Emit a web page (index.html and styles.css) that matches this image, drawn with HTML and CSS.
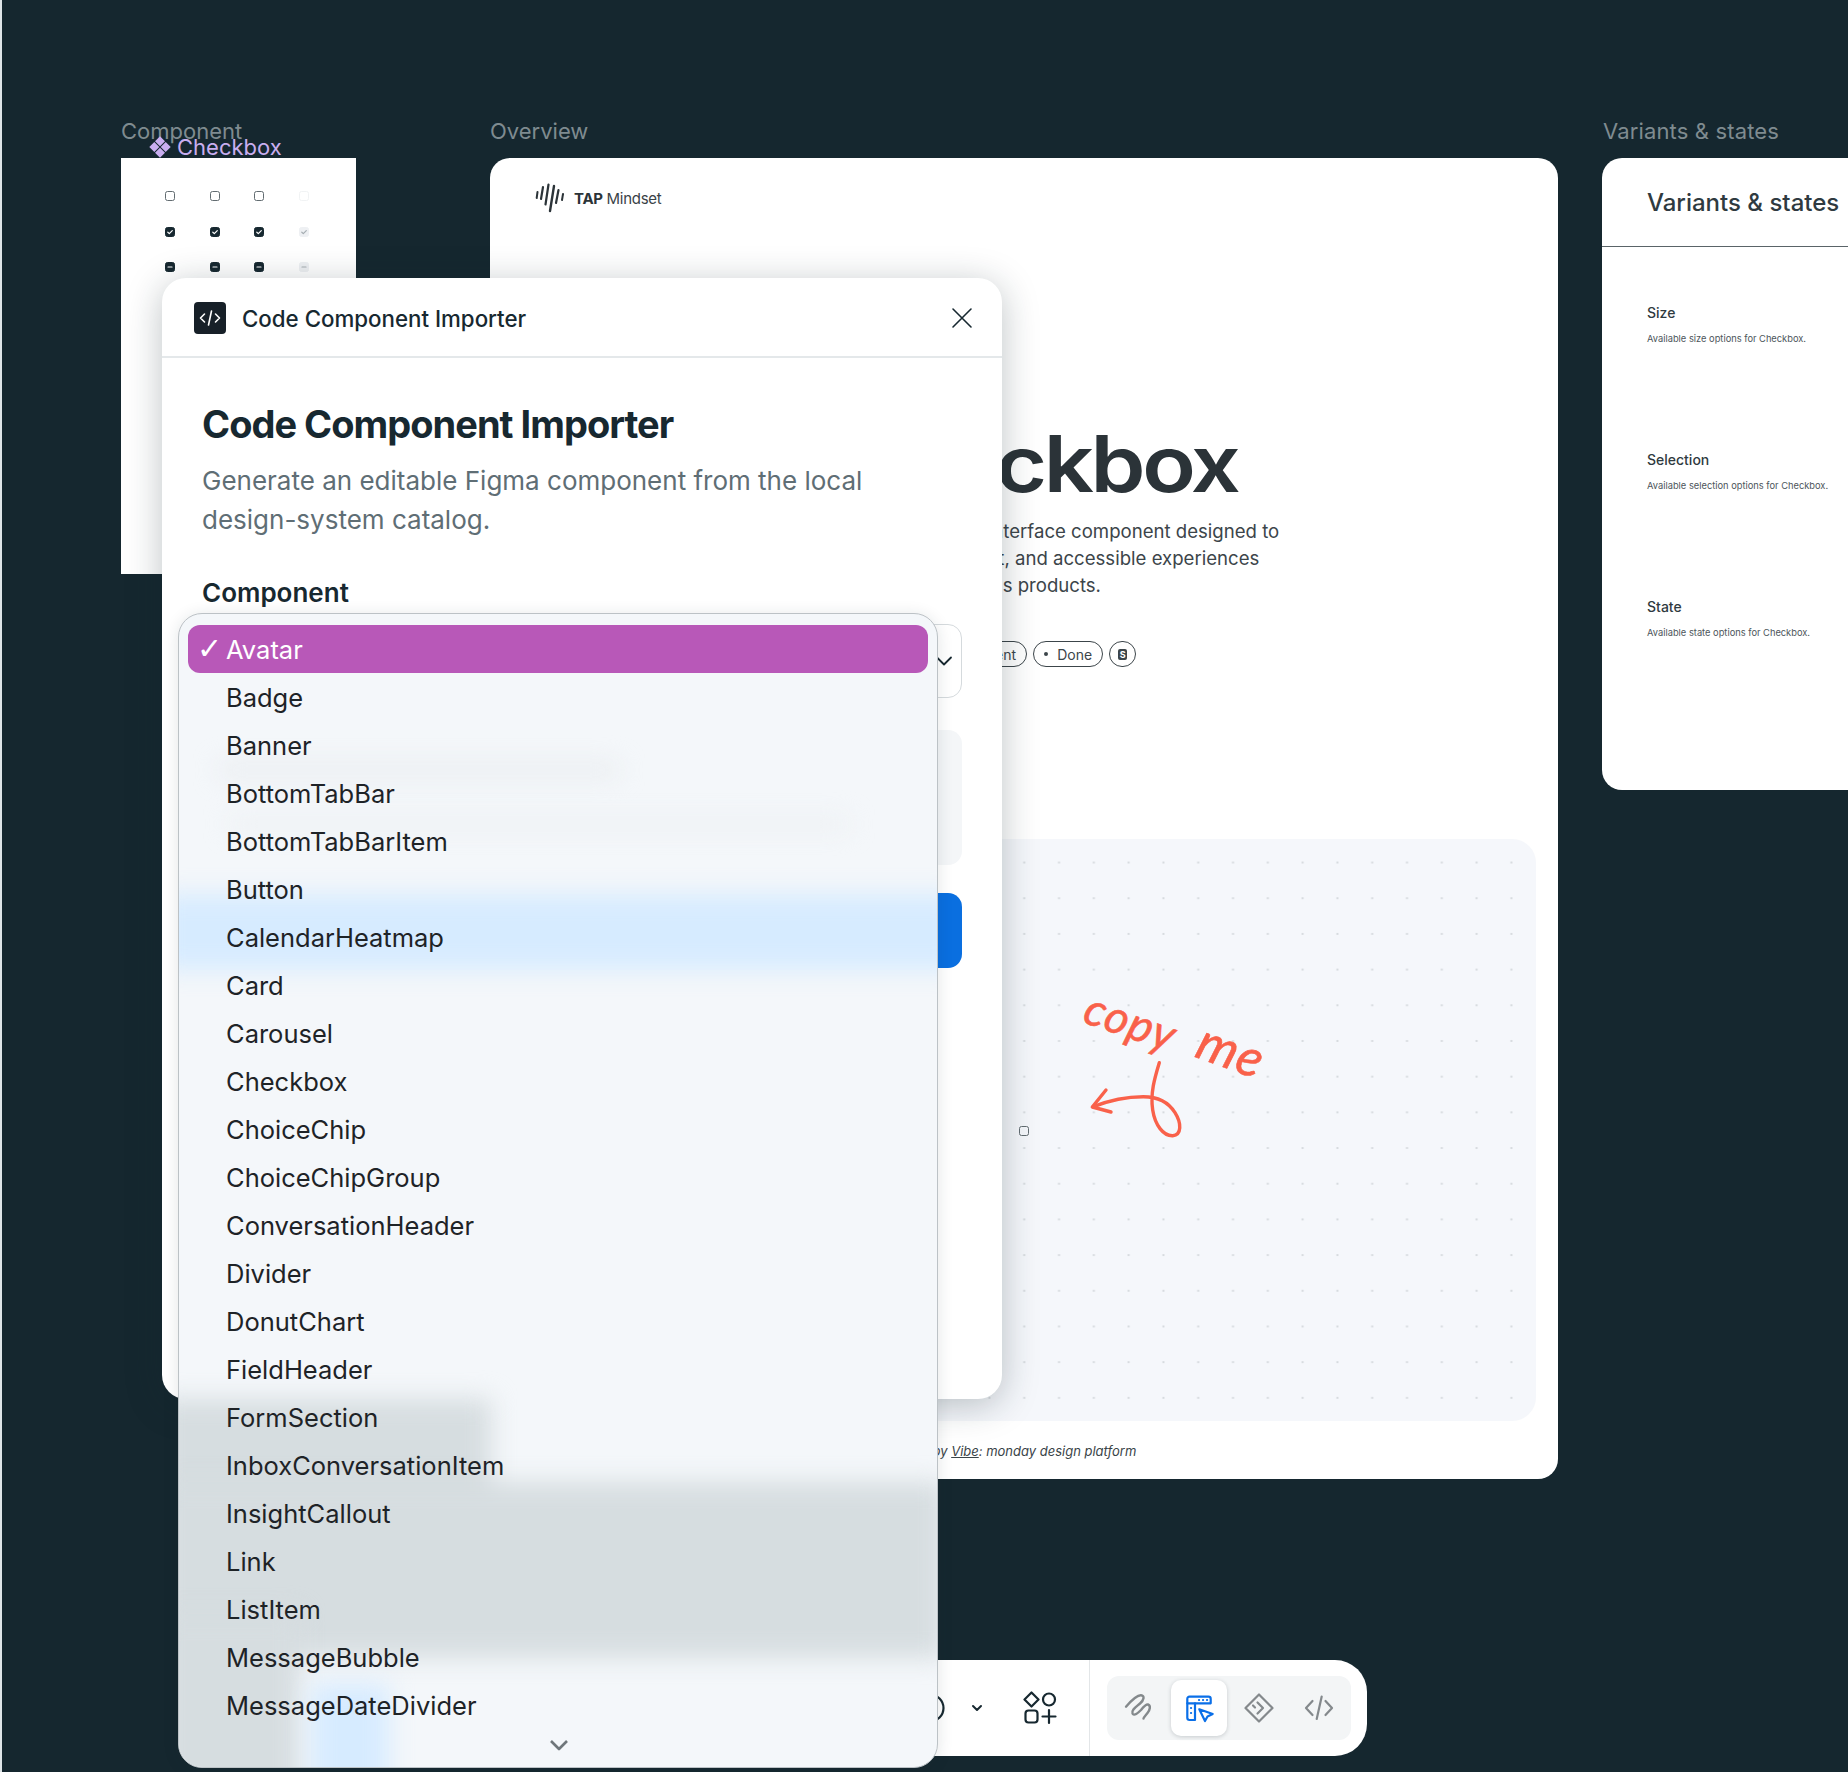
FILE: index.html
```html
<!DOCTYPE html>
<html lang="en">
<head>
    <meta charset="UTF-8">
    <meta name="viewport" content="width=device-width, initial-scale=1.0">
    <title>Code Component Importer</title>
    <link rel="stylesheet" href="styles.css">
</head>
<body>
    <div class="canvas">
        <!-- frame labels -->
        <div class="frame-label label-component">Component</div>
        <div class="frame-label label-overview">Overview</div>
        <div class="frame-label label-variants">Variants &amp; states</div>
        <div class="instance-label">
            <svg width="22" height="22" viewBox="0 0 22 22"><path fill="#c9aef0" d="M11 0.300l5 5-5 5-5-5zM5.300 6l5 5-5 5-5-5zM16.700 6l5 5-5 5-5-5zM11 11.700l5 5-5 5-5-5z"/></svg>
            <span>Checkbox</span>
        </div>

        <!-- component frame -->
        <div class="component-frame">
            <div class="check-grid">
                <span class="cb"></span><span class="cb"></span><span class="cb"></span><span class="cb off"></span>
                <span class="cb on">
                    <svg viewBox="0 0 10 10"><path d="M2.800 5.200l1.500 1.400 3-3"/></svg>
                </span>
                <span class="cb on">
                    <svg viewBox="0 0 10 10"><path d="M2.800 5.200l1.500 1.400 3-3"/></svg>
                </span>
                <span class="cb on">
                    <svg viewBox="0 0 10 10"><path d="M2.800 5.200l1.500 1.400 3-3"/></svg>
                </span>
                <span class="cb on off">
                    <svg viewBox="0 0 10 10"><path d="M2.800 5.200l1.500 1.400 3-3"/></svg>
                </span>
                <span class="cb on"><svg viewBox="0 0 10 10"><path d="M3 5h4"/></svg></span>
                <span class="cb on"><svg viewBox="0 0 10 10"><path d="M3 5h4"/></svg></span>
                <span class="cb on"><svg viewBox="0 0 10 10"><path d="M3 5h4"/></svg></span>
                <span class="cb on off"><svg viewBox="0 0 10 10"><path d="M3 5h4"/></svg></span>
            </div>
        </div>

        <!-- overview frame -->
        <div class="overview-frame">
            <div class="brand">
                <svg width="30" height="30" viewBox="0 0 30 30" fill="none" stroke="#2b3338" stroke-linecap="round">
                    <path stroke-width="2" d="M2.500 9l-.8 6"/>
                    <path stroke-width="2.200" d="M8 4l-2 12"/>
                    <path stroke-width="2.200" d="M13.500 1.500l-3 20"/>
                    <path stroke-width="2.400" d="M19 3l-4 25"/>
                    <path stroke-width="2.200" d="M23.500 7l-2.500 13"/>
                    <path stroke-width="2" d="M28 11l-1 6"/>
                </svg>
                <span class="brand-name"><b>TAP</b> Mindset</span>
            </div>
            <div class="hero">
                <h1 class="hero-title">Checkbox</h1>
                <p class="hero-desc">
                    <span>Checkbox is a user interface component designed to</span>
                    <span>to create a consistent, and accessible experiences</span>
                    <span>across all your various products.</span>
                </p>
                <div class="chips">
                    <span class="chip">Component</span>
                    <span class="chip"><i class="chip-dot"></i>Done</span>
                    <span class="chip chip-icon"><i class="chip-s">S</i></span>
                </div>
            </div>
            <div class="copy-panel">
                <span class="cb panel-cb"></span>
                <div class="copy-note">
                    <span class="copy-word copy-1">copy</span>
                    <span class="copy-word copy-2">me</span>
                    <svg class="copy-arrow" viewBox="0 0 300 220" fill="none" stroke="#f9614a" stroke-width="3.400" stroke-linecap="round" stroke-linejoin="round">
                        <path d="M159.300 102.700C155 117 150 133 152.700 150C155 165 163.300 176 172.700 175.700C181.700 175 181.700 163.300 175 152.700C168.300 141.700 156.700 136.700 143.300 136.700C126.700 136.700 110 140 93.300 146.700"/>
                        <path d="M106 130L92.300 147L111 152"/>
                    </svg>
                </div>
            </div>
            <p class="credit">Design system inspired by <u>Vibe</u>: monday design platform</p>
        </div>

        <!-- variants frame -->
        <div class="variants-frame">
            <h2 class="variants-title">Variants &amp; states</h2>
            <div class="variant-list">
                <div class="variant"><h3>Size</h3><p>Available size options for Checkbox.</p></div>
                <div class="variant"><h3>Selection</h3><p>Available selection options for Checkbox.</p></div>
                <div class="variant"><h3>State</h3><p>Available state options for Checkbox.</p></div>
            </div>
        </div>

        <!-- bottom toolbar -->
        <div class="toolbar">
            <div class="tool-blue"></div>
            <div class="tool-right">
                <svg class="tool-circle" width="30" height="30" viewBox="0 0 30 30" fill="none" stroke="#172830" stroke-width="2.200"><circle cx="15" cy="15" r="13.500"/></svg>
                <svg class="tool-caret" width="12" height="8" viewBox="0 0 12 8" fill="none" stroke="#172830" stroke-width="2" stroke-linecap="round" stroke-linejoin="round"><path d="M2 2l4 4 4-4"/></svg>
                <svg class="tool-shapes" width="34" height="34" viewBox="0 0 34 34" fill="none" stroke="#172830" stroke-width="2.200" stroke-linejoin="round">
                    <path d="M8.500 1.500L15.500 8.500L8.500 15.500L1.500 8.500Z"/>
                    <circle cx="26" cy="8.500" r="6"/>
                    <rect x="2.500" y="19.500" width="12" height="12" rx="3"/>
                    <path d="M26 19v13M19.500 25.500h13" stroke-linecap="round"/>
                </svg>
                <div class="tool-divider"></div>
                <div class="mode-group">
                    <div class="mode">
                        <svg width="32" height="32" viewBox="0 0 32 32" fill="none" stroke="#84898c" stroke-width="2.400" stroke-linecap="round" stroke-linejoin="round"><path d="M3 14.700C8 9 14 3 18 3.300C22 3.600 21 8 17 11.500C13 15 8 18 9.500 21.500C11 24.500 15 21 18 18C20 15.500 23 12 25 12.500C28 13.500 27 18 24.500 21C23 23 20.500 25.500 20.500 26.500"/></svg>
                    </div>
                    <div class="mode mode-active">
                        <svg width="32" height="32" viewBox="0 0 32 32" fill="none" stroke="#0a6fe8" stroke-width="2.200" stroke-linecap="round" stroke-linejoin="round">
                            <path d="M12 28H6.500A2.200 2.200 0 0 1 4.300 25.800V6.900A2.200 2.200 0 0 1 6.500 4.700H25.500A2.200 2.200 0 0 1 27.700 6.900V11.300H12Z"/>
                            <path d="M4.300 11.300H12"/>
                            <path d="M16 8h.1M20 8h.1M24 8h.1M8 16h.1M8 21h.1"/>
                            <path d="M16.300 17.300L29.700 22L24.500 24.500L22 29Z"/>
                        </svg>
                    </div>
                    <div class="mode">
                        <svg width="32" height="32" viewBox="0 0 32 32" fill="none" stroke="#84898c" stroke-width="2.200" stroke-linecap="round" stroke-linejoin="round">
                            <path d="M16 2.500L29.500 16L16 29.500L2.500 16Z"/>
                            <path d="M14.500 10.500L20 16L14.500 21.500M10 13.500L12 15.500"/>
                        </svg>
                    </div>
                    <div class="mode">
                        <svg width="32" height="32" viewBox="0 0 32 32" fill="none" stroke="#84898c" stroke-width="2.200" stroke-linecap="round" stroke-linejoin="round"><path d="M9.500 9L3 16L9.500 23M22.500 9L29 16L22.500 23M18.700 4.500L13.700 27"/></svg>
                    </div>
                </div>
            </div>
        </div>

        <!-- plugin window -->
        <div class="modal">
            <div class="modal-head">
                <span class="plugin-icon">
                    <svg width="24" height="24" viewBox="0 0 24 24" fill="none" stroke="#fff" stroke-width="1.600" stroke-linecap="round" stroke-linejoin="round"><path d="M6.500 8L2.500 12L6.500 16M17.500 8L21.500 12L17.500 16M13.500 5L10.500 19"/></svg>
                </span>
                <span class="modal-name">Code Component Importer</span>
                <svg class="modal-close" width="22" height="22" viewBox="0 0 22 22" fill="none" stroke="#172830" stroke-width="1.600" stroke-linecap="round"><path d="M2 2L20 20M20 2L2 20"/></svg>
            </div>
            <div class="modal-body">
                <h2 class="modal-title">Code Component Importer</h2>
                <p class="modal-sub">Generate an editable Figma component from the local design-system catalog.</p>
                <div class="field-label">Component</div>
                <div class="select">
                    <span>Avatar</span>
                    <svg width="18" height="12" viewBox="0 0 18 12" fill="none" stroke="#172830" stroke-width="1.800" stroke-linecap="round" stroke-linejoin="round"><path d="M2 2.500L9 9.500L16 2.500"/></svg>
                </div>
                <div class="select-note"></div>
                <div class="primary-btn"></div>
            </div>
        </div>

        <!-- native select list -->
        <div class="dropdown">
            <div class="blur-layer">
                <i class="smear smear-a"></i>
                <i class="smear smear-b"></i>
                <i class="smear smear-blue"></i>
                <i class="smear smear-dark-left"></i>
                <i class="smear smear-dark-band"></i>
                <i class="smear smear-dark-corner"></i>
                <i class="smear smear-tool"></i>
            </div>
            <div class="option selected"><span class="tick">✓</span>Avatar</div>
            <div class="option">Badge</div>
            <div class="option">Banner</div>
            <div class="option">BottomTabBar</div>
            <div class="option">BottomTabBarItem</div>
            <div class="option">Button</div>
            <div class="option">CalendarHeatmap</div>
            <div class="option">Card</div>
            <div class="option">Carousel</div>
            <div class="option">Checkbox</div>
            <div class="option">ChoiceChip</div>
            <div class="option">ChoiceChipGroup</div>
            <div class="option">ConversationHeader</div>
            <div class="option">Divider</div>
            <div class="option">DonutChart</div>
            <div class="option">FieldHeader</div>
            <div class="option">FormSection</div>
            <div class="option">InboxConversationItem</div>
            <div class="option">InsightCallout</div>
            <div class="option">Link</div>
            <div class="option">ListItem</div>
            <div class="option">MessageBubble</div>
            <div class="option">MessageDateDivider</div>
            <svg class="more" width="20" height="12" viewBox="0 0 20 12" fill="none" stroke="#6f767a" stroke-width="2.600" stroke-linejoin="round"><path d="M2 2L10 10L18 2"/></svg>
        </div>
    </div>
</body>
</html>
```

FILE: styles.css
```css
* {
    box-sizing: border-box;
    margin: 0;
    padding: 0;
}
html, body {
    height: 100%;
}
body {
    background-color: #15272f;
    font-family: "Inter", "Liberation Sans", sans-serif;
    overflow: hidden;
}

/* free canvas: frames sit where they were placed */
.canvas {
    position: relative;
    width: 1848px;
    height: 1772px;
    overflow: hidden;
}
.canvas::before {
    content: "";
    position: absolute;
    left: 0;
    top: 0;
    width: 2px;
    height: 100%;
    background: #dfe5e8;
}
.frame-label {
    position: absolute;
    top: 118px;
    font-size: 22px;
    line-height: 26px;
    color: #7f8b90;
}
.label-component { left: 121px; }
.label-overview { left: 490px; }
.label-variants { left: 1603px; letter-spacing: 0.15px; }
.instance-label {
    position: absolute;
    left: 149px;
    top: 135px;
    display: flex;
    align-items: center;
    gap: 6px;
    font-size: 22px;
    line-height: 24px;
    color: #c9aef0;
}

/* component frame */
.component-frame {
    position: absolute;
    left: 121px;
    top: 158px;
    width: 235px;
    height: 416px;
    background: #fff;
    padding: 33px 0 0 44px;
}
.check-grid {
    display: grid;
    grid-template-columns: repeat(4, 10px);
    grid-auto-rows: 10px;
    column-gap: 34.600px;
    row-gap: 25.700px;
}
.cb {
    display: block;
    width: 10px;
    height: 10px;
    border: 1px solid #626c71;
    border-radius: 2.500px;
}
.cb svg {
    display: block;
    width: 10px;
    height: 10px;
    margin: -1px;
    fill: none;
    stroke: #fff;
    stroke-width: 1.200;
    stroke-linecap: round;
    stroke-linejoin: round;
}
.cb.on {
    background: #172830;
    border-color: #172830;
}
.cb.off {
    border-color: #f1f3f4;
}
.cb.on.off {
    background: #eef0f3;
    border-color: #eef0f3;
}
.cb.on.off svg {
    stroke: #a5adb2;
}

/* overview frame */
.overview-frame {
    position: absolute;
    left: 490px;
    top: 158px;
    width: 1068px;
    height: 1321px;
    background: #fff;
    border-radius: 20px;
    padding: 22px 22px 0;
}
.brand {
    display: flex;
    align-items: center;
    gap: 9px;
    margin-left: 23px;
    height: 36px;
}
.brand-name {
    font-size: 15px;
    letter-spacing: -0.3px;
    color: #3a4247;
}
.brand-name b {
    font-weight: 700;
    color: #2b3338;
}
.hero {
    margin-top: 204px;
    padding-left: 303px;
    height: 419px;
}
.hero-title {
    margin-left: 20px;
    font-size: 78px;
    line-height: 88px;
    font-weight: 600;
    letter-spacing: -3px;
    color: #2b3338;
    white-space: nowrap;
    /* the original face is wider than anything installed */
    transform: scaleX(1.13);
    transform-origin: left center;
}
.hero-desc {
    margin-top: 10px;
    font-size: 18.600px;
    line-height: 26.800px;
    color: #3c454a;
    white-space: nowrap;
}
.hero-desc span {
    display: block;
}
.chips {
    display: flex;
    gap: 6px;
    margin-top: 43px;
    margin-left: 113px;
}
.chip {
    display: flex;
    align-items: center;
    height: 26px;
    padding: 0 10px;
    border: 1.500px solid #3c454a;
    border-radius: 13px;
    font-size: 14px;
    color: #3c454a;
}
.chip-dot {
    width: 4px;
    height: 4px;
    margin-right: 9px;
    border-radius: 50%;
    background: #3c454a;
}
.chip-icon {
    width: 27px;
    padding: 0;
    justify-content: center;
}
.chip-s {
    width: 9px;
    height: 11px;
    border-radius: 2px;
    background: #3c454a;
    color: #fff;
    font-size: 9px;
    font-style: normal;
    font-weight: 700;
    line-height: 11px;
    text-align: center;
}
.copy-panel {
    position: relative;
    height: 582px;
    background-color: #f5f7fb;
    background-image: radial-gradient(circle at center, #d6dade 0, #d6dade 0.9px, transparent 1.300px);
    background-size: 34.800px 35.700px;
    background-position: 7.700px 5.700px;
    border-radius: 24px;
}
.panel-cb {
    position: absolute;
    left: 507px;
    top: 287px;
}
.copy-note {
    position: absolute;
    left: 488px;
    top: 121px;
    width: 300px;
    height: 220px;
}
.copy-word {
    position: absolute;
    font-family: "Lato", sans-serif;
    font-style: italic;
    font-size: 46px;
    line-height: 46px;
    color: #f9614a;
    letter-spacing: 1px;
    -webkit-text-stroke: 0.6px #f9614a;
}
.copy-1 {
    left: 84px;
    top: 38px;
    transform: rotate(19deg);
}
.copy-2 {
    left: 198px;
    top: 66px;
    font-size: 52px;
    transform: rotate(20deg);
}
.copy-arrow {
    position: absolute;
    left: 0;
    top: 0;
    width: 300px;
    height: 220px;
}
.credit {
    margin-top: 20px;
    padding-left: 274px;
    font-size: 13px;
    line-height: 20px;
    font-style: italic;
    color: #3a4448;
    white-space: nowrap;
}

/* variants frame */
.variants-frame {
    position: absolute;
    left: 1602px;
    top: 158px;
    width: 400px;
    height: 632px;
    background: #fff;
    border-radius: 20px;
}
.variants-title {
    height: 89px;
    padding: 30px 0 0 45px;
    border-bottom: 1px solid #5a6468;
    font-size: 24px;
    line-height: 30px;
    font-weight: 500;
    color: #2f3a40;
    white-space: nowrap;
}
.variant-list {
    padding: 56px 0 0 45px;
}
.variant {
    height: 147px;
}
.variant h3 {
    font-size: 14px;
    line-height: 20px;
    font-weight: 500;
    color: #2f3a40;
}
.variant p {
    margin-top: 9px;
    font-size: 9.300px;
    line-height: 14px;
    color: #4d565b;
    white-space: nowrap;
}

/* bottom toolbar */
.toolbar {
    position: absolute;
    left: 300px;
    top: 1660px;
    width: 1067px;
    height: 96px;
    display: flex;
    align-items: center;
    justify-content: space-between;
    padding: 0 16px 0 14px;
    background: #fff;
    border-radius: 32px;
}
.tool-blue {
    width: 76px;
    height: 56px;
    border-radius: 10px;
    background: #0a6fe8;
}
.tool-right {
    display: flex;
    align-items: center;
    height: 96px;
}
.tool-circle {
    margin-right: 26px;
}
.tool-caret {
    margin-right: 40px;
}
.tool-shapes {
    margin-right: 32px;
}
.tool-divider {
    width: 1.500px;
    height: 96px;
    margin-right: 17px;
    background: #e3e6e8;
}
.mode-group {
    display: flex;
    gap: 4px;
    padding: 4px;
    background: #f3f5f6;
    border-radius: 12px;
}
.mode {
    display: flex;
    align-items: center;
    justify-content: center;
    width: 56px;
    height: 56px;
    border-radius: 10px;
}
.mode-active {
    background: #fff;
    box-shadow: 0 1px 4px rgba(23, 40, 48, 0.2);
}

/* plugin window */
.modal {
    position: absolute;
    left: 162px;
    top: 278px;
    width: 840px;
    height: 1121px;
    background: #fff;
    border-radius: 24px;
    box-shadow: 0 6px 36px rgba(23, 40, 48, 0.28);
}
.modal-head {
    display: flex;
    align-items: center;
    height: 80px;
    padding: 2px 29px 0 32px;
    border-bottom: 2px solid #e4e8ea;
}
.plugin-icon {
    display: flex;
    align-items: center;
    justify-content: center;
    width: 32px;
    height: 32px;
    margin-right: 16px;
    border-radius: 4px;
    background: #172028;
}
.modal-name {
    flex: 1;
    font-size: 22.300px;
    font-weight: 500;
    color: #172830;
}
.modal-body {
    padding: 43px 40px 0;
}
.modal-title {
    font-size: 38px;
    line-height: 46px;
    font-weight: 700;
    letter-spacing: -0.980px;
    color: #172830;
}
.modal-sub {
    margin-top: 15px;
    width: 700px;
    font-size: 26px;
    line-height: 38.500px;
    color: #5f6e75;
}
.field-label {
    margin-top: 38px;
    font-size: 26px;
    line-height: 32px;
    font-weight: 600;
    color: #172830;
}
.select {
    display: flex;
    align-items: center;
    justify-content: space-between;
    height: 74px;
    margin-top: 15px;
    padding: 0 8px 0 24px;
    border: 1.500px solid #d5dadd;
    border-radius: 14px;
    font-size: 24px;
    color: #172830;
}
.select-note {
    height: 135px;
    margin-top: 32px;
    background: #f4f6f8;
    border-radius: 14px;
}
.primary-btn {
    height: 75px;
    margin-top: 28px;
    background: #0a6fe0;
    border-radius: 14px;
}

/* native select list */
.dropdown {
    position: absolute;
    left: 178px;
    top: 613px;
    width: 760px;
    height: 1155px;
    padding: 11px 9px 0;
    background: #f4f7fa;
    border: 1px solid #bcc2c6;
    border-radius: 24px;
    overflow: hidden;
    box-shadow: 0 2px 16px rgba(23, 40, 48, 0.12);
}
.blur-layer {
    position: absolute;
    inset: 0;
}
.smear {
    position: absolute;
    display: block;
    filter: blur(12px);
}
.smear-a {
    left: 40px;
    top: 150px;
    width: 400px;
    height: 12px;
    background: #e7eaed;
}
.smear-b {
    left: 50px;
    top: 205px;
    width: 620px;
    height: 10px;
    background: #ebeef1;
}
.smear-blue {
    left: -20px;
    top: 280px;
    width: 800px;
    height: 76px;
    background: #d6ebff;
}
.smear-dark-left {
    left: -20px;
    top: 785px;
    width: 332px;
    height: 120px;
    background: #d6dde0;
}
.smear-dark-band {
    left: -20px;
    top: 868px;
    width: 785px;
    height: 176px;
    background: #d6dde0;
}
.smear-dark-corner {
    left: -20px;
    top: 1000px;
    width: 140px;
    height: 190px;
    background: #d6dde0;
}
.smear-tool {
    left: 132px;
    top: 1070px;
    width: 78px;
    height: 110px;
    background: #d6ebff;
}
.option {
    position: relative;
    height: 48px;
    padding-left: 38px;
    font-size: 25.500px;
    line-height: 50px;
    color: #1e2327;
    white-space: nowrap;
}
.option.selected {
    background: #b858b8;
    border-radius: 12px;
    color: #fff;
}
.tick {
    position: absolute;
    left: 9px;
    top: 0;
    font-family: "DejaVu Sans", sans-serif;
    font-size: 30px;
    line-height: 48px;
    font-weight: 700;
}
.more {
    position: absolute;
    left: 370px;
    top: 1125px;
}

.modal-close {
    display: block;
}
```
